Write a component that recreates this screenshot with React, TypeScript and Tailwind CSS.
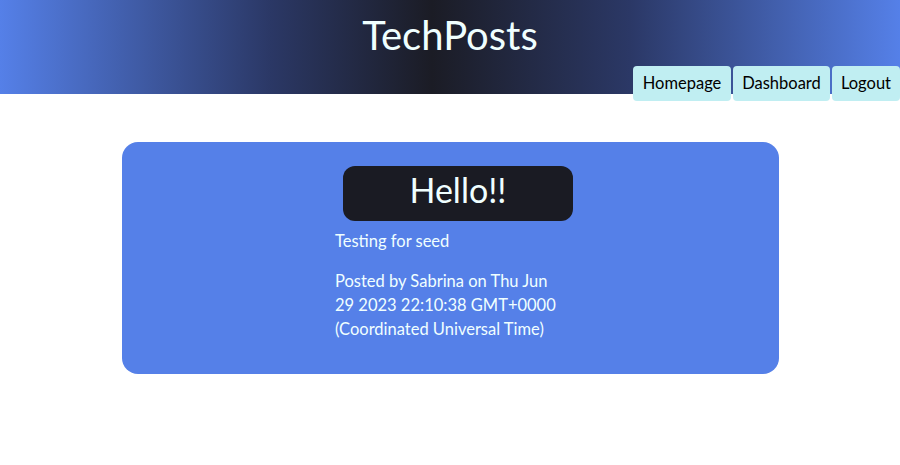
export default function App() {
  const links = [
    { label: "Homepage", w: "w-[98px]" },
    { label: "Dashboard", w: "w-[97px]" },
    { label: "Logout", w: "w-[68px]" },
  ];
  return (
    <div className="min-h-[465px] bg-white font-['Lato','Open_Sans',sans-serif] text-[#f0ffff]">
      <header className="relative h-[94px] bg-[linear-gradient(to_right,#5580e8_0%,#2b3866_30%,#1b1c25_48%,#2b3866_70%,#5580e8_100%)]">
        <h1 className="pt-[11px] text-center text-[40px] leading-[48px] text-[#f0ffff]">TechPosts</h1>
        <nav className="absolute right-0 top-[66px] flex gap-[2px]">
          {links.map((l) => (
            <a
              key={l.label}
              className={`flex h-[35px] items-center justify-center rounded-[4px] bg-[#c0eef2] text-[16.5px] text-black ${l.w}`}
            >
              {l.label}
            </a>
          ))}
        </nav>
      </header>

      <main className="flex justify-center pt-[48px]">
        <section className="flex h-[232px] w-[657px] flex-col items-center rounded-[16px] bg-[#5580e8] pt-[24px]">
          <h2 className="ml-[16px] flex h-[55px] w-[230px] items-center justify-center rounded-[12px] bg-[#1a1b23] pb-[9px] text-[34px] text-[#f0ffff]">
            Hello!!
          </h2>
          <div className="w-[230px] pr-[6px] text-[16.5px] leading-[24px]">
            <p className="mt-[8px]">Testing for seed</p>
            <p className="mt-[16px]">
              Posted by Sabrina on Thu Jun 29 2023 22:10:38 GMT+0000 (Coordinated Universal Time)
            </p>
          </div>
        </section>
      </main>
    </div>
  );
}
